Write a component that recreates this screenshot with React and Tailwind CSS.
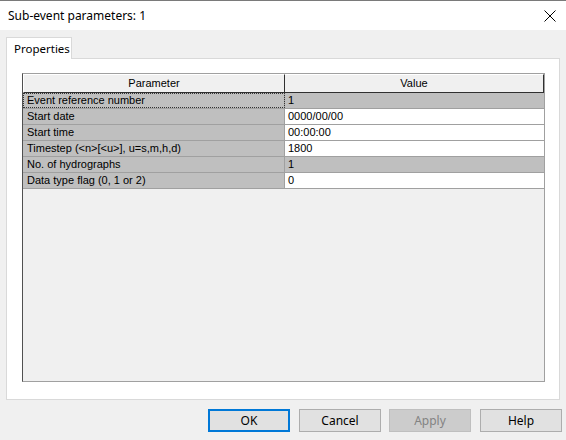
import React from "react";

const rows = [
  { p: "Event reference number", v: "1", ro: true, focus: true },
  { p: "Start date", v: "0000/00/00" },
  { p: "Start time", v: "00:00:00" },
  { p: "Timestep (<n>[<u>], u=s,m,h,d)", v: "1800" },
  { p: "No. of hydrographs", v: "1", ro: true },
  { p: "Data type flag (0, 1 or 2)", v: "0" },
];

function Btn({ children, primary, disabled, extra = "" }) {
  return (
    <button
      className={
        "w-[82px] h-[23px] flex items-center justify-center text-[12px] " +
        extra +
        " " +
        (primary
          ? "border-2 border-[#0078d7] bg-[#e1e1e1] text-black"
          : disabled
          ? "border border-[#bfbfbf] bg-[#cccccc] text-[#838383]"
          : "border border-[#adadad] bg-[#e1e1e1] text-black")
      }
    >
      {children}
    </button>
  );
}

export default function App() {
  return (
    <div
      className="w-[566px] h-[440px] bg-[#f0f0f0] border-t border-[#7a7a7a] flex flex-col overflow-hidden"
      style={{ fontFamily: '"Noto Sans", "Open Sans", sans-serif' }}
    >
      <div className="h-[29px] bg-white flex items-center justify-between pl-[8px] pr-[9px] shrink-0">
        <span className="text-[12px] text-black">Sub-event parameters: 1</span>
        <svg width="12" height="12" viewBox="0 0 12 12" className="mr-[1px]">
          <path d="M0.5 0.5 L11.5 11.5 M11.5 0.5 L0.5 11.5" stroke="#000" strokeWidth="1" />
        </svg>
      </div>
      <div className="flex flex-col pl-[6px] pr-[6px] pt-[7px]">
        <div className="flex">
          <div className="h-[22px] w-[66px] bg-white border-l border-t border-r border-[#d9d9d9] flex items-center pl-[7px] text-[11.5px] text-black -mb-px relative z-10">
            Properties
          </div>
        </div>
        <div className="h-[342px] bg-white border border-[#d9d9d9] pl-[15px] pt-[14px]">
          <div
            className="w-[523px] h-[309px] border border-[#a0a0a0] border-l-[#505050] bg-[#f0f0f0] flex flex-col text-[11px] text-black"
            style={{ fontFamily: '"Liberation Sans", Arial, sans-serif' }}
          >
            <div className="flex h-[19px]">
              <div className="w-[262px] bg-[#f0f0f0] border-t border-l border-white border-r border-b border-r-[#303030] border-b-[#303030] flex items-center justify-center">
                Parameter
              </div>
              <div className="flex-1 bg-[#f0f0f0] border-t border-white border-r border-b border-r-[#303030] border-b-[#303030] flex items-center justify-center">
                Value
              </div>
            </div>
            {rows.map((r, i) => (
              <div key={i} className="flex h-[16px] border-b border-[#a0a0a0]">
                <div
                  className={
                    "w-[262px] bg-[#bfbfbf] border-r border-[#a0a0a0] flex items-center pl-[4px] " +
                    (r.focus ? "outline outline-1 outline-dotted outline-[#333] -outline-offset-1" : "")
                  }
                >
                  {r.p}
                </div>
                <div
                  className={
                    "flex-1 flex items-center pl-[3px] " + (r.ro ? "bg-[#bfbfbf]" : "bg-white")
                  }
                >
                  {r.v}
                </div>
              </div>
            ))}
          </div>
        </div>
        <div className="flex justify-end gap-[8px] mt-[9px] mr-[-2px]">
          <Btn primary extra="mr-[1px]">OK</Btn>
          <Btn>Cancel</Btn>
          <Btn disabled extra="mr-[1px]">Apply</Btn>
          <Btn>Help</Btn>
        </div>
      </div>
    </div>
  );
}
